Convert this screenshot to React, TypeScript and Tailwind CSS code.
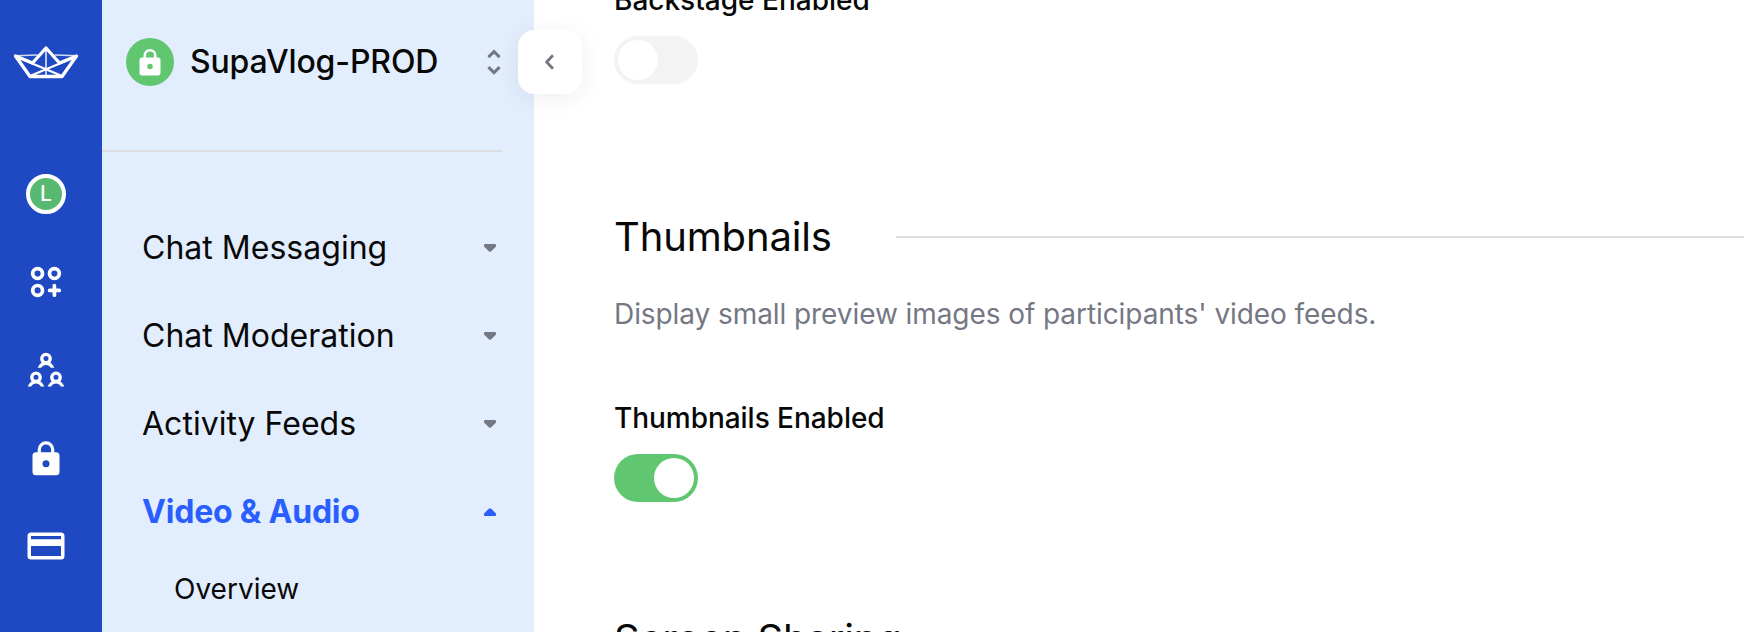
import React from "react";

const navItems = ["Chat Messaging", "Chat Moderation", "Activity Feeds"];

function BoatLogo() {
  return (
    <svg width="66" height="34" viewBox="0 0 66 34" fill="none" stroke="#fff" strokeLinejoin="round" strokeLinecap="round">
      <path d="M33 3V31" strokeWidth="2" opacity=".7" />
      <path d="M2.5 11.5L49 31M63.5 11.5L17 31" strokeWidth="2.2" />
      <path d="M2 10.7L24 10M64 10.7L42 10" strokeWidth="1.6" opacity=".8" />
      <path d="M2.5 11L17 31.5H49L63.5 11L46.5 18L33 3L19.5 18Z" strokeWidth="3.3" />
    </svg>
  );
}

function Lock({ className }: { className: string }) {
  return (
    <svg viewBox="0 0 28 36" className={className}>
      <path d="M7.3 14V9.5a6.7 6.7 0 0 1 13.4 0V14" fill="none" stroke="#fff" strokeWidth="3.2" />
      <path fill="#fff" fillRule="evenodd" d="M4 12.3h20a3.5 3.5 0 0 1 3.5 3.5v16a3.5 3.5 0 0 1-3.5 3.5H4A3.5 3.5 0 0 1 .5 31.8v-16A3.5 3.5 0 0 1 4 12.3ZM14 20.3a3.5 3.5 0 1 0 0 7 3.5 3.5 0 0 0 0-7Z" />
    </svg>
  );
}

function GridPlus() {
  return (
    <svg width="32" height="32" viewBox="0 0 32 32" fill="none" stroke="#fff" strokeWidth="3.7" strokeLinecap="round">
      <circle cx="7.6" cy="7.6" r="4.9" />
      <circle cx="24.4" cy="7.6" r="4.9" />
      <circle cx="7.6" cy="24.4" r="4.9" />
      <path d="M24.4 19.6V29.2M19.6 24.4H29.2" />
    </svg>
  );
}

function Person({ x, y }: { x: number; y: number }) {
  return (
    <g transform={`translate(${x} ${y})`}>
      <circle cx="0" cy="0" r="4.2" strokeWidth="3.4" />
      <path fill="#fff" stroke="none" d="M-8.3 9.2C-7.2 6.6-5.6 4.8-3.9 3.6L0 4.6L3.9 3.6C5.6 4.8 7.2 6.6 8.3 9.2H4.8C3.8 7.3 2 6.3 0 6.3S-3.8 7.3-4.8 9.2Z" />
    </g>
  );
}

function People() {
  return (
    <svg width="38" height="36" viewBox="0 0 38 36" fill="none" stroke="#fff">
      <Person x={19} y={6.6} />
      <Person x={9} y={25.3} />
      <Person x={29} y={25.3} />
    </svg>
  );
}

function Card() {
  return (
    <svg width="38" height="28" viewBox="0 0 38 28">
      <path fill="#fff" fillRule="evenodd" d="M4 .5h30A3.5 3.5 0 0 1 37.5 4v20a3.5 3.5 0 0 1-3.5 3.5H4A3.5 3.5 0 0 1 .5 24V4A3.5 3.5 0 0 1 4 .5ZM4 4v3.2h30V4ZM4 14v10h30V14Z" />
    </svg>
  );
}

function Caret({ className }: { className: string }) {
  return (
    <svg width="12" height="8" viewBox="0 0 12 8" className={className}>
      <path fill="currentColor" d="M.9 0H11.1Q12 0 12 .9V1.9Q12 2.4 11.5 2.9L7.2 7.2Q6 8.4 4.8 7.2L.5 2.9Q0 2.4 0 1.9V.9Q0 0 .9 0Z" />
    </svg>
  );
}

function Toggle({ on }: { on: boolean }) {
  return (
    <div className={`mt-2 flex h-12 w-21 items-center rounded-full p-1 ${on ? "justify-end bg-[#60c670]" : "justify-start bg-[#f3f3f3]"}`}>
      <div className="size-10 rounded-full bg-white" />
    </div>
  );
}

export default function App() {
  return (
    <div className="flex h-[632px] w-[1744px] overflow-hidden bg-white font-[Inter,sans-serif] text-[#080808]">
      <aside className="flex w-[102px] shrink-0 flex-col items-center bg-[#1f49c3] pr-[10px]">
        <div className="flex h-[124px] items-center"><BoatLogo /></div>
        <div className="mt-[26px] flex h-[88px] items-center">
          <div className="flex size-10 items-center justify-center rounded-full border-4 border-white bg-[#58ba72] text-[21px] font-medium text-white">L</div>
        </div>
        <div className="flex h-[88px] items-center"><GridPlus /></div>
        <div className="flex h-[88px] items-center"><People /></div>
        <div className="flex h-[88px] items-center"><Lock className="h-9 w-7" /></div>
        <div className="flex h-[88px] items-center"><Card /></div>
      </aside>

      <nav className="relative w-[432px] shrink-0 bg-[#e2eefd]">
        <div className="mr-8 flex h-[152px] items-start border-b-2 border-[#dcdce0] pt-[38px] pl-6">
          <div className="flex size-12 items-center justify-center rounded-full bg-[#60c670]">
            <Lock className="h-7 w-[22px]" />
          </div>
          <div className="ml-4 text-[32px] leading-12 font-medium tracking-[-0.15px]">SupaVlog-PROD</div>
          <svg className="mt-[11px] mr-[1px] ml-auto" width="14" height="26" viewBox="0 0 14 26" fill="none" stroke="#747883" strokeWidth="3.1">
            <path d="M1.4 8.1L7 2.7L12.6 8.1M1.4 18.2L7 23.6L12.6 18.2" />
          </svg>
        </div>
        <div className="mt-[52px] flex flex-col">
          {navItems.map((item) => (
            <div key={item} className="flex h-[88px] items-center justify-between pr-[38px] pl-10 text-[32px] tracking-[0.02px]">
              <span>{item}</span>
              <Caret className="text-[#747883]" />
            </div>
          ))}
          <div className="flex h-[88px] items-center justify-between pr-[38px] pl-10 text-[32px] font-bold tracking-[-0.2px] text-[#2a5eff]">
            <span>Video &amp; Audio</span>
            <Caret className="rotate-180" />
          </div>
          <div className="flex h-[66px] items-center pl-18 text-[28px]">Overview</div>
        </div>
        <button className="absolute top-[30px] left-[416px] flex size-16 items-center justify-center rounded-2xl bg-white shadow-[0_4px_24px_rgba(0,0,0,0.07)]">
          <svg width="12" height="16" viewBox="0 0 12 16" fill="none" stroke="#747883" strokeWidth="2.8" strokeLinejoin="round">
            <path d="M9 1.3L2.6 8L9 14.7" />
          </svg>
        </button>
      </nav>

      <main className="-mt-7 flex flex-1 flex-col pl-20">
        <div className="text-[28px] leading-14 font-medium">Backstage Enabled</div>
        <Toggle on={false} />
        <div className="mt-[129px] flex items-center">
          <h2 className="w-[282px] text-[40px] leading-12 tracking-[-0.15px]">Thumbnails</h2>
          <div className="h-[2px] flex-1 bg-[#dbdce1]" />
        </div>
        <p className="mt-[33px] text-[28px] leading-10 tracking-[-0.075px] text-[#747883]">Display small preview images of participants' video feeds.</p>
        <div className="mt-14 text-[28px] leading-14 font-medium tracking-[-0.04px]">Thumbnails Enabled</div>
        <Toggle on />
        <h2 className="mt-[113px] text-[40px] leading-12 tracking-[-0.15px]">Screen Sharing</h2>
      </main>
    </div>
  );
}
